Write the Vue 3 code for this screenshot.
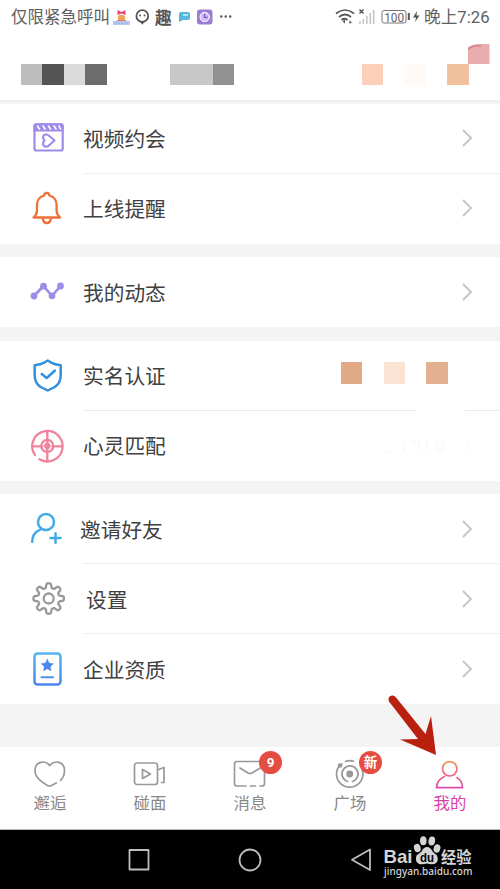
<script setup>
const groups = [
  [{ icon: 'film', label: '视频约会', arrow: true }, { icon: 'bell', label: '上线提醒', arrow: true }],
  [{ icon: 'activity', label: '我的动态', arrow: true }],
  [{ icon: 'shield', label: '实名认证', swatches: true }, { icon: 'target', label: '心灵匹配' }],
  [
    { icon: 'invite', label: '邀请好友', arrow: true, cls: 'near' },
    { icon: 'gear', label: '设置', arrow: true, cls: 'far' },
    { icon: 'card', label: '企业资质', arrow: true }
  ]
]
const tabs = [
  { icon: 'heart', label: '邂逅' },
  { icon: 'video', label: '碰面' },
  { icon: 'mail', label: '消息', badge: '9' },
  { icon: 'orbit', label: '广场', badge: '新' },
  { icon: 'me', label: '我的', active: true }
]
const gearPath = (() => {
  const pts = []
  for (let i = 0; i <= 160; i++) {
    const a = (i / 160) * Math.PI * 2
    const r = 13 + 2.3 * Math.tanh(2.2 * Math.cos(8 * a))
    pts.push(`${(21.7 + r * Math.sin(a)).toFixed(2)} ${(19.5 - r * Math.cos(a)).toFixed(2)}`)
  }
  return 'M' + pts.join('L') + 'Z'
})()
</script>

<template>
  <div class="screen">
    <header class="top">
      <div class="status">
        <span class="carrier">仅限紧急呼叫</span>
        <svg class="people" width="38" height="24" viewBox="112 5 38 24">
          <path d="M117.500 10l4 2 4-2v5l-4-1.500-4 1.500z" fill="#e94579" />
          <rect x="118" y="15" width="7" height="6" rx="2" fill="#f1a35a" />
          <path d="M117 20h9v2h-9z" fill="#e77460" />
          <rect x="113" y="21" width="17" height="4" fill="#b8c9ef" />
          <path d="M115 23h13" stroke="#8faae5" stroke-dasharray="2 1" />
          <circle cx="142.300" cy="16" r="5.900" fill="none" stroke="#555" stroke-width="1.800" />
          <path d="M139.800 21.500l2.500 3.200 2.500-3.200z" fill="#555" />
          <circle cx="140" cy="15.500" r="1" fill="#555" /><circle cx="144.500" cy="15.500" r="1" fill="#555" />
        </svg>
        <span class="qu">趣</span>
        <svg class="notices" width="58" height="24" viewBox="176 5 58 24">
          <path d="M181 12h7q2 0 2 2v4q0 2-2 2h-5l-4 2v-8q0-2 2-2z" fill="#54b9dc" />
          <path d="M183 15h5" stroke="#d7f4fa" stroke-width="1.500" />
          <rect x="197" y="9.500" width="15.500" height="15" rx="3" fill="#9d7bd4" />
          <circle cx="204.700" cy="17" r="4.700" fill="#cfbcf0" stroke="#fff" stroke-width="1" />
          <path d="M204.500 14v3.300h3.200" fill="none" stroke="#795abd" stroke-width="1.300" />
          <g fill="#555"><circle cx="221.300" cy="16.500" r="1.200" /><circle cx="225.700" cy="16.500" r="1.200" /><circle cx="230.200" cy="16.500" r="1.200" /></g>
        </svg>
        <svg class="signals" width="88" height="24" viewBox="334 5 88 24">
          <g fill="none" stroke="#555" stroke-width="1.700">
            <path d="M336 13.500q9-7 18 0M339 17q6-5 12 0M341.500 20q3-2.500 6 0" />
          </g>
          <path d="M345 19.500v4l-2.500-2zM349.500 20.500l2.500 1.700-2.500 1.800z" fill="#555" />
          <path d="M359.500 9.500l4 4M363.500 9.500l-4 4" stroke="#555" stroke-width="1.500" />
          <path d="M360 24v-3M363.300 24v-5M366.800 24v-8M370.300 24v-11M373.700 24v-14" stroke="#c5c5c5" stroke-width="1.600" />
          <rect x="382" y="10.500" width="24" height="12.500" rx="2" fill="none" stroke="#777" />
          <text x="384.200" y="21.500" class="battery" textLength="20" lengthAdjust="spacingAndGlyphs">100</text>
          <path d="M408.800 13v7" stroke="#555" stroke-width="2" />
          <path d="M417 11l-4 6.500h3l-1 4.500 4.500-6.500h-3z" fill="#555" />
        </svg>
        <span class="time">晚上7:26</span>
      </div>
      <div class="profile">
        <div class="mosaic"><i class="g1" /><i class="g2" /><i class="g3" /><i class="g4" /></div>
        <div class="mosaic second"><i class="g5" /><i class="g5" /><i class="g6" /></div>
        <div class="mosaic warm"><i class="w1" /><i class="w2" /><i class="w3" /></div>
        <svg class="corner" width="22" height="20" viewBox="0 0 22 20"><path d="M0 3q5-3 10-3h11.500v20H0z" fill="#e9adb0" /><path d="M0 6q4-5 13-4" fill="none" stroke="#d78389" stroke-width="1.500" /></svg>
      </div>
    </header>

    <main>
      <section v-for="(g, gi) in groups" :key="gi" class="group">
        <div v-for="r in g" :key="r.icon" class="row">
          <svg class="icon" width="40" height="40" viewBox="0 0 40 40" fill="none" stroke-linecap="round" stroke-linejoin="round">
            <g v-if="r.icon === 'film'" stroke="#9f8bea" stroke-width="2.200">
              <rect x="7.500" y="5.300" width="28.200" height="26.200" rx="2" />
              <path d="M7.500 7q0-1.700 2-1.700h24q2 0 2 1.700v4.500h-28z" fill="#9f8bea" />
              <path d="M10.500 7l2 3M16 7l2 3M21.500 7l2 3M27 7l2 3M32 7l1.500 3" stroke="#fff" stroke-width="1.600" />
              <path d="M27.500 21.500l-6 5.300c-2.500 1.700-5.500.500-5.500-2q0-1.700 1.500-3.300-1.700-1.500-1.500-3.500c.2-2.500 3.500-3.300 5.700-1.500z" />
            </g>
            <g v-else-if="r.icon === 'bell'" stroke="#ee713a" stroke-width="2.300">
              <path d="M6.500 28.500q3.500-3.200 3.500-7v-5.500q0-7.500 7.200-9.500 0-2.500 2.600-2.500t2.600 2.500q7.200 2 7.200 9.500v5.500q0 3.800 3.500 7z" />
              <path d="M15.800 29.500q.5 4.500 4 4.500t4-4.500" />
            </g>
            <g v-else-if="r.icon === 'activity'" stroke="#9f8bea" stroke-width="2.700">
              <path d="M7 24l9.500-10 8.500 10 8.500-10" />
              <g fill="#9f8bea" stroke="none"><circle cx="7" cy="24" r="3.400" /><circle cx="16.500" cy="14.200" r="3.400" /><circle cx="25" cy="23.800" r="3.400" /><circle cx="33.500" cy="14" r="3.400" /></g>
            </g>
            <g v-else-if="r.icon === 'shield'" stroke="#328fdd" stroke-width="2.500">
              <path d="M20.700 4.500l3 1.800q4 2.200 10 3v10.200q0 7.500-6 11.500l-7 3.500-7-3.500q-6-4-6-11.500V9.300q6-.8 10-3z" />
              <path d="M14.700 18l5 4 8.300-7.500" />
            </g>
            <g v-else-if="r.icon === 'target'" stroke="#f0839c" stroke-width="2.300">
              <path d="M12.500 33.200A15.200 15.200 0 1 0 8 29" />
              <circle cx="20.300" cy="20" r="6" /><circle cx="20.300" cy="20" r="2" />
              <path d="M20.300 5v30M5.500 20.300h10M25 20.300h10" />
            </g>
            <g v-else-if="r.icon === 'invite'" stroke="#43aae8" stroke-width="2.500">
              <circle cx="19" cy="13" r="8" /><path d="M5.200 32.700q0-8.500 8-12" /><path d="M23.500 29h10M28.500 24.200v9.500" />
            </g>
            <g v-else-if="r.icon === 'gear'" stroke="#999" stroke-width="2.300">
              <path :d="gearPath" /><circle cx="21.700" cy="19.500" r="5" />
            </g>
            <g v-else>
              <defs><linearGradient id="cardStroke" x1="0" y1="0" x2="0" y2="1"><stop stop-color="#55b5ef" /><stop offset="1" stop-color="#4c86ea" /></linearGradient></defs>
              <rect x="7.500" y="4.500" width="26" height="31" rx="3" stroke="url(#cardStroke)" stroke-width="2.500" />
              <path d="M20.300 10.300l1.800 3.800 4.200.600-3 3 .700 4.100-3.700-2-3.700 2 .700-4.100-3-3 4.200-.600z" fill="#4c86ea" stroke="#4c86ea" stroke-width=".5" />
              <path d="M14.500 28.300h11.500" stroke="#4c93ea" stroke-width="2" />
            </g>
          </svg>
          <div class="body" :class="{ broken: r.swatches }">
            <span class="label" :class="r.cls">{{ r.label }}</span>
            <svg v-if="r.arrow" class="chevron" width="14" height="22" viewBox="0 0 14 22"><path d="M3 3l8 8-8 8" fill="none" stroke="#c7c7c7" stroke-width="2" /></svg>
            <div v-if="r.swatches" class="swatches"><i class="s1" /><i class="s2" /><i class="s3" /></div>
            <svg v-if="r.icon === 'target'" class="trace" width="90" height="22" viewBox="0 0 90 22"><path d="M2 18q4 2 8-1M22 8v9M30 8h7v8M45 7v10M54 8h8v8h-8zM84 7l3 4-3 5" fill="none" stroke="#f9f9f9" stroke-width="2" /></svg>
          </div>
        </div>
      </section>
    </main>

    <nav class="tabs">
      <div v-for="t in tabs" :key="t.icon" class="tab" :class="{ active: t.active }">
        <div class="tab-icon">
          <svg width="36" height="36" viewBox="0 0 36 36" fill="none" stroke="#999" stroke-width="1.700" stroke-linecap="round" stroke-linejoin="round">
            <path v-if="t.icon === 'heart'" d="M28.500 24.500q4-4 4-10c0-9-10-11-14.800-5C13 3.500 3 5.500 3 14.500c0 7.500 7.500 12 12.500 15q2 1 4 0l5-2.700" />
            <g v-else-if="t.icon === 'video'"><rect x="2.500" y="7" width="23" height="21.500" rx="2.500" /><path d="M10.500 13.500v9l8-4.500zM26.500 13.500l5.500-2v15h-2.500" /></g>
            <g v-else-if="t.icon === 'mail'"><path d="M14 30H5q-2.500 0-2.500-2.500V8Q2.500 5.500 5 5.500h25q2.500 0 2.500 2.500v19.500Q32.500 30 30 30h-2M18.500 30h5" /><path d="M8 12l8 5q2 1 4 0l9-5.500" /></g>
            <g v-else-if="t.icon === 'orbit'"><path d="M10 8Q4.500 11.500 4.500 18a13.200 13.200 0 0 0 26.400 0q0-3-1.200-5.500M13.500 5.500q4-1.500 8-.3" /><path d="M15.500 25.500a8 8 0 1 1 5 0" /><circle cx="17.700" cy="18" r="2.600" fill="#999" /><circle cx="8" cy="9.500" r="1.500" fill="#999" /></g>
            <g v-else stroke="url(#meStroke)">
              <defs><linearGradient id="meStroke" gradientUnits="userSpaceOnUse" x1="0" y1="5" x2="0" y2="32"><stop stop-color="#f39a55" /><stop offset=".5" stop-color="#ee6580" /><stop offset="1" stop-color="#d94cae" /></linearGradient></defs>
              <circle cx="17.700" cy="12.800" r="7.200" /><path d="M12.500 20.500q-7.500 3-8 11.200h26q0-7-5.500-10" />
            </g>
          </svg>
          <b v-if="t.badge" class="badge">{{ t.badge }}</b>
        </div>
        <span>{{ t.label }}</span>
      </div>
    </nav>

    <footer class="system">
      <svg width="500" height="59" viewBox="0 830 500 59" fill="none" stroke="#bdbdbd" stroke-width="1.800" stroke-linejoin="round">
        <rect x="129.500" y="850" width="19" height="19.500" /><circle cx="250" cy="860" r="10.500" /><path d="M370 849.500v20.500l-18-10.200z" />
        <g stroke="none" fill="#d4d4d4">
          <text class="brand" x="383.500" y="863" textLength="29" lengthAdjust="spacingAndGlyphs">Bai</text>
          <ellipse cx="417.300" cy="848" rx="3.300" ry="4.200" transform="rotate(-18 417.300 848)" /><ellipse cx="423.300" cy="840.700" rx="3.300" ry="4.500" />
          <ellipse cx="431.800" cy="841" rx="3.300" ry="4.500" transform="rotate(10 431.800 841)" /><ellipse cx="437" cy="848.500" rx="3.300" ry="4.200" transform="rotate(18 437 848.500)" />
          <path d="M427 847q3.500 0 5.500 4.500l4.500 4q2.500 6-2.500 8.500-4 .5-7.500-.5-4 1.200-8 .500-4.500-2.500-2.500-8.500l5-4q2-4.500 5.500-4.500z" />
          <text x="420" y="862" class="du" fill="#000" textLength="14" lengthAdjust="spacingAndGlyphs">du</text>
          <text class="exp" x="441" y="862.500" textLength="30.500" lengthAdjust="spacingAndGlyphs">经验</text>
          <text class="url" x="384" y="875.300" textLength="88.500" lengthAdjust="spacingAndGlyphs">jingyan.baidu.com</text>
        </g>
      </svg>
    </footer>
    <svg class="pointer" width="52" height="64" viewBox="386 692 52 64">
      <path d="M389 701.500q-2-5 3-6 2-.5 4 2l29.500 36.500 5.500-18 5 39-36-15.500 18-.5z" fill="#b9200f" />
    </svg>
  </div>
</template>

<style>
body { margin: 0; }
</style>
<style scoped>
.screen { position: relative; width: 500px; height: 889px; display: flex; flex-direction: column; overflow: hidden; background: #f4f4f4; font-family: Roboto, "Noto Sans CJK SC", sans-serif; }
.top { height: 100px; flex: none; background: #fff; box-shadow: 0 1px 1px #eee; }
.status { height: 34px; display: flex; align-items: center; padding-left: 11px; box-sizing: border-box; color: #606060; font-size: 16.500px; line-height: 24px; white-space: nowrap; }
.carrier { width: 101px; padding-top: 1px; }
.people, .notices, .signals { flex: none; }
.signals { margin-left: 100px; }
.time { margin-left: 2px; font-size: 16.700px; padding-top: 1px; }
.qu { width: 21px; margin-left: 5px; margin-right: 0; font: 500 16.500px/24px "Noto Sans CJK SC", sans-serif; color: #505050; -webkit-text-stroke: .3px #505050; }
.battery { font: 13.500px Roboto, sans-serif; fill: #666; }
.profile { position: relative; height: 66px; display: flex; align-items: flex-start; padding: 30px 0 0 21px; box-sizing: border-box; }
.mosaic { display: flex; }
.mosaic i { width: 21.400px; height: 21px; }
.second { margin-left: 63.500px; }
.warm { margin-left: 127.500px; gap: 21.300px; }
.g1 { background: #bdbdbd; } .g2 { background: #545454; } .g3 { background: #dadada; } .g4 { background: #6c6c6c; }
.g5 { background: #c8c8c8; } .g6 { background: #919191; }
.w1 { background: #fccfb9; } .w2 { background: #fffaf5; } .w3 { background: #f2c19d; }
.corner { position: absolute; left: 468px; top: 10px; }
main { display: flex; flex-direction: column; gap: 13.600px; padding-top: 4px; height: 647px; flex: none; box-sizing: border-box; }
.group { background: #fff; }
.row { height: 69.950px; display: flex; align-items: center; padding-left: 27px; box-sizing: border-box; }
.icon { flex: none; }
.body { flex: 1; align-self: stretch; display: flex; align-items: center; justify-content: space-between; margin-left: 16px; padding-right: 26px; box-sizing: border-box; border-bottom: 1px solid #efefef; }
.row:last-child .body { border-bottom-color: transparent; }
.body.broken { border-image: linear-gradient(to right, #e9e9e9 332px, #fff 332px, #fff 381px, #e9e9e9 381px) 1; }
.label { padding-top: 4px; font-size: 20.700px; line-height: 30px; color: #414141; white-space: nowrap; }
.near { margin-left: -3px; }
.far { margin-left: 3px; }
.swatches { display: flex; gap: 21.300px; margin: 0 26.500px 5px 0; }
.swatches i { width: 21.300px; height: 21.300px; }
.s1 { background: #e2a985; } .s2 { background: #fbe3d3; } .s3 { background: #e3b091; }
.trace { margin-right: 2px; }
.tabs { height: 83px; background: #fff; display: grid; grid-template-columns: repeat(5, 1fr); flex: none; box-shadow: inset 0 -1px #bbb; }
.tab { display: flex; flex-direction: column; align-items: center; padding-top: 9px; color: #888; font-size: 16.400px; line-height: 24px; }
.tab-icon { position: relative; height: 36px; }
.tab-icon svg { display: block; }
.active { color: #d93fa3; }
.badge { position: absolute; left: 27px; top: -5.500px; width: 23px; height: 23px; border-radius: 50%; background: #e54d42; color: #fff; font-size: 13.500px; line-height: 23px; text-align: center; }
.system { height: 59px; background: #000; flex: none; }
.system svg { display: block; }
.brand { font: bold 18.500px "Liberation Sans", sans-serif; }
.du { font: bold 12px "Liberation Sans", sans-serif; }
.exp { font: bold 15.500px "Noto Sans CJK SC", sans-serif; }
.url { font: 500 11px "Noto Sans", sans-serif; }
.pointer { position: absolute; left: 386px; top: 692px; }
</style>
